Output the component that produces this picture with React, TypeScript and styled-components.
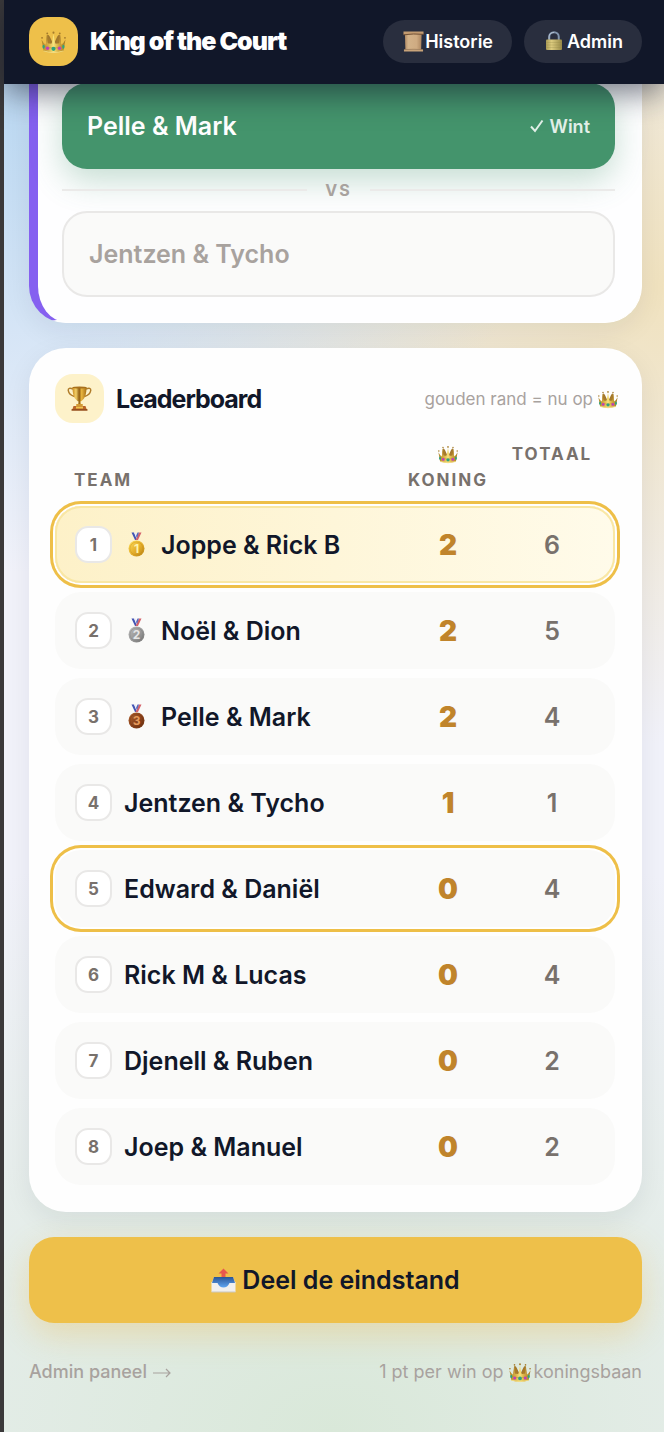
import React, { useId } from 'react';
import styled, { createGlobalStyle, css } from 'styled-components';

const GlobalStyle = createGlobalStyle`
  *, *::before, *::after { box-sizing: border-box; }
  body {
    margin: 0;
    background: #f1f2fa;
    color: #111729;
    font-family: Inter, "Liberation Sans", sans-serif;
    font-size: 16px;
  }
  button { font: inherit; border: 0; cursor: pointer; }
`;

/* ---------- pictograms ---------- */

const Glyph = styled.svg<{ $size: number }>`
  display: block;
  flex: none;
  width: ${(p) => p.$size}px;
  height: ${(p) => p.$size}px;
`;

type IconProps = { size: number };

function Crown({ size }: IconProps) {
  const id = useId();
  return (
    <Glyph $size={size} viewBox="0 0 48 48" aria-hidden="true">
      <defs>
        <linearGradient id={id} x1="0" x2="1">
          <stop offset="0" stopColor="#b1862a" />
          <stop offset=".3" stopColor="#d9b148" />
          <stop offset=".5" stopColor="#f8e27a" />
          <stop offset=".7" stopColor="#d6ac42" />
          <stop offset="1" stopColor="#a27a24" />
        </linearGradient>
      </defs>
      <path d="M9 34 L11 12 Q14 9 17 15 L23 28 H25 L31 15 Q34 9 37 12 L39 34 Z" fill="#a1782e" />
      <path
        d="M5 42 L1 20 Q5 28 9 30 L12 11 Q13 21 17 27 Q20 30 21 26 L24 9 L27 26 Q28 30 31 27 Q35 21 36 11 L39 30 Q43 28 47 20 L43 42 Q24 49 5 42 Z"
        fill={`url(#${id})`}
      />
      <path d="M12 12 Q11 20 13 27 Q16 29 19 27 Q17 20 12 12 Z M36 12 Q37 20 35 27 Q32 29 29 27 Q31 20 36 12 Z" fill="#a87b2a" />
      <path d="M4 33 Q24 40 44 33" fill="none" stroke="#b58a30" strokeWidth="1" />
      <path d="M5 42 Q24 48 43 42" fill="none" stroke="#f3dc82" strokeWidth="2" />
      <g fill="#a67c2c">
        <circle cx="2" cy="17" r="1.800" />
        <circle cx="12" cy="8.500" r="1.800" />
        <circle cx="24" cy="7" r="2" />
        <circle cx="36" cy="8.500" r="1.800" />
        <circle cx="46" cy="17" r="1.800" />
      </g>
      <circle cx="24" cy="38" r="4" fill="#2fa27d" />
      <circle cx="12.500" cy="37" r="3.300" fill="#c13fb8" />
      <circle cx="35.500" cy="37" r="3.300" fill="#c13fb8" />
      <ellipse cx="5" cy="34" rx="2.200" ry="3.800" fill="#2fa27d" />
      <ellipse cx="43" cy="34" rx="2.200" ry="3.800" fill="#2fa27d" />
    </Glyph>
  );
}

function Scroll({ size }: IconProps) {
  const id = useId();
  return (
    <Glyph $size={size} viewBox="0 0 44 44" aria-hidden="true">
      <defs>
        <linearGradient id={id} x1="0" x2="1">
          <stop offset="0" stopColor="#b18a63" />
          <stop offset=".2" stopColor="#d3b289" />
          <stop offset=".7" stopColor="#cfab82" />
          <stop offset="1" stopColor="#ad8660" />
        </linearGradient>
      </defs>
      <path d="M4 5 H39 L38 39 H5 Z" fill={`url(#${id})`} />
      <path d="M1 1 H43 V7 Q22 5 1 8 Z" fill="#c39b70" />
      <path d="M1 8 Q22 5 43 7" stroke="#6d4d32" strokeWidth="2" fill="none" />
      <path d="M2 39 Q22 37 42 39 L42 43 H2 Z" fill="#c9a47a" />
      <path d="M2 39 Q22 37 42 39" stroke="#a07c56" strokeWidth="1" fill="none" />
    </Glyph>
  );
}

function Lock({ size }: IconProps) {
  const id = useId();
  return (
    <Glyph $size={size} viewBox="0 0 40 40" aria-hidden="true">
      <defs>
        <linearGradient id={id} x1="0" x2="1">
          <stop offset="0" stopColor="#a99a55" />
          <stop offset=".35" stopColor="#dccb7e" />
          <stop offset="1" stopColor="#988a48" />
        </linearGradient>
      </defs>
      <path d="M10.500 19 V11.500 A9.500 9 0 0 1 29.500 11.500 V19" fill="none" stroke="#8295ad" strokeWidth="4" />
      <path d="M10 17 V11.500 A10 9 0 0 1 20 3" fill="none" stroke="#c1cddd" strokeWidth="1.500" />
      <rect x="4" y="17" width="32" height="21" rx="2" fill={`url(#${id})`} />
      <path d="M5 23 H35 M5 28 H35 M5 33 H35" stroke="#8e8244" strokeWidth="1" opacity=".5" />
    </Glyph>
  );
}

function Trophy({ size }: IconProps) {
  const id = useId();
  return (
    <Glyph $size={size} viewBox="0 0 50 50" aria-hidden="true">
      <defs>
        <linearGradient id={id} x1="0" x2="1">
          <stop offset="0" stopColor="#c98b1f" />
          <stop offset=".25" stopColor="#f4d26a" />
          <stop offset=".48" stopColor="#8e5d12" />
          <stop offset=".65" stopColor="#e9b640" />
          <stop offset="1" stopColor="#a66f16" />
        </linearGradient>
      </defs>
      <path
        d="M12 6 Q2 2 2.500 9 Q4 18 15 21 M38 6 Q48 2 47.500 9 Q46 18 35 21"
        fill="none"
        stroke="#b07c2a"
        strokeWidth="3"
      />
      <path d="M11 2 H39 Q39 18 34 25 Q30 30 27 31 L28 39 H22 L23 31 Q20 30 16 25 Q11 18 11 2 Z" fill={`url(#${id})`} />
      <ellipse cx="25" cy="3" rx="14" ry="2" fill="#a8701c" />
      <rect x="18" y="36" width="14" height="4" rx="2" fill="#d19a35" />
      <path d="M13 40 H37 L39 46 H11 Z" fill="#b9652a" />
      <path d="M18 41 H32 V45 H18 Z" fill="#f0c64f" />
      <rect x="9" y="46" width="32" height="3.500" rx="1" fill="#96501f" />
    </Glyph>
  );
}

const medalTone = {
  1: { light: '#ffe05a', mid: '#e3ac2a', dark: '#b98314', mark: '#fff3ac' },
  2: { light: '#bdbdbd', mid: '#989898', dark: '#747474', mark: '#e6e6e6' },
  3: { light: '#b0622f', mid: '#8a421b', dark: '#692f10', mark: '#e59a5c' },
};

const MedalMark = styled.text`
  font-family: Inter, "Liberation Sans", sans-serif;
  font-size: 24px;
  font-weight: 700;
  text-anchor: middle;
`;

function Medal({ size, place }: IconProps & { place: 1 | 2 | 3 }) {
  const id = useId();
  const tone = medalTone[place];
  return (
    <Glyph $size={size} viewBox="0 0 50 50" role="img" aria-label={`Plaats ${place}`}>
      <defs>
        <linearGradient id={id} x1="0" y1="0" x2="1" y2="1">
          <stop offset="0" stopColor={tone.light} />
          <stop offset=".55" stopColor={tone.mid} />
          <stop offset="1" stopColor={tone.dark} />
        </linearGradient>
      </defs>
      <path d="M15 1 H20 L27 16 H22 Z" fill="#4355b4" />
      <path d="M20 1 H24 L27 12 L26 16 Z" fill="#e9ecf8" />
      <path d="M35 1 H30 L23 16 H28 Z" fill="#d5626a" />
      <path d="M30 1 H27 L24 8 L26 12 Z" fill="#5566bb" />
      <circle cx="25" cy="33" r="16" fill={`url(#${id})`} />
      <circle cx="25" cy="33" r="13" fill="none" stroke={tone.dark} strokeWidth="1.200" opacity=".5" />
      <MedalMark x="25" y="41.500" fill={tone.mark}>
        {place}
      </MedalMark>
    </Glyph>
  );
}

function Outbox({ size }: IconProps) {
  const id = useId();
  return (
    <Glyph $size={size} viewBox="0 0 50 50" aria-hidden="true">
      <defs>
        <linearGradient id={id} x1="0" y1="0" x2="0" y2="1">
          <stop offset="0" stopColor="#2a5595" />
          <stop offset="1" stopColor="#5ea5f2" />
        </linearGradient>
      </defs>
      <path d="M6 18 H44 L49 31 H1 Z" fill="#d9dde2" />
      <path d="M1 28 H49 V48 H1 Z" fill="#f1f0ee" />
      <path d="M6 18 H44 L48 30 H37 Q33 39 25 39 Q17 39 13 30 H2 Z" fill={`url(#${id})`} />
      <path d="M1 48 H49" stroke="#c9c6bf" strokeWidth="2" />
      <path d="M25 1 L35 11 H29 V18 H21 V11 H15 Z" fill="#e8584d" />
    </Glyph>
  );
}

function Check({ size }: IconProps) {
  return (
    <Glyph $size={size} viewBox="0 0 14 14" aria-hidden="true">
      <path d="M1 7.500 L5 12 L12.500 1.500" fill="none" stroke="currentColor" strokeWidth="2" />
    </Glyph>
  );
}

function Arrow() {
  return (
    <Glyph $size={18} viewBox="0 0 18 18" aria-hidden="true">
      <path d="M0 10 H17 M13 6 L17 10 L13 14" fill="none" stroke="currentColor" strokeWidth="1.200" />
    </Glyph>
  );
}

/* ---------- layout ---------- */

const Page = styled.div`
  min-height: 100vh;
  border-left: 4px solid #3b393a;
  background:
    radial-gradient(ellipse 85% 32% at 0% 8%, rgba(184, 215, 242, 0.9), rgba(184, 215, 242, 0) 100%),
    radial-gradient(ellipse 90% 32% at 100% 20%, rgba(240, 224, 184, 0.9), rgba(240, 224, 184, 0) 100%),
    radial-gradient(ellipse 130% 42% at 50% 100%, rgba(217, 232, 217, 1), rgba(217, 232, 217, 0) 100%),
    #f1f2fa;
`;

const TopBar = styled.header`
  position: sticky;
  top: 0;
  z-index: 2;
  display: flex;
  align-items: center;
  justify-content: space-between;
  height: 84px;
  padding: 0 22px 2px 25px;
  background: #111729;
  box-shadow: 0 8px 32px rgba(17, 23, 41, 0.6);
`;

const Brand = styled.div`
  display: flex;
  align-items: center;
  gap: 12px;
`;

const IconTile = styled.span<{ $tone: 'gold' | 'cream' }>`
  display: grid;
  place-items: center;
  width: 49px;
  height: 49px;
  border-radius: 18px;
  background: ${(p) => (p.$tone === 'gold' ? '#eec04a' : '#fdf2ca')};
`;

const BrandName = styled.h1`
  margin: 0;
  font-size: 25px;
  font-weight: 900;
  letter-spacing: -1px;
  color: #fff;
`;

const Nav = styled.nav`
  display: flex;
  gap: 12px;
`;

const NavLink = styled.a<{ $gap: number }>`
  display: flex;
  align-items: center;
  gap: ${(p) => p.$gap}px;
  height: 43px;
  padding: 0 19px 0 20px;
  border-radius: 22px;
  background: #292e3e;
  color: #fff;
  font-size: 18px;
  font-weight: 600;
  text-decoration: none;
`;

const Content = styled.main`
  display: flex;
  flex-direction: column;
  gap: 25px;
  margin-top: -1px;
  padding: 0 22px 0 25px;
`;

const MatchCard = styled.section`
  display: flex;
  flex-direction: column;
  padding: 0 26px 25px 24px;
  border: 1px solid #fff;
  border-top: 0;
  border-left: 9px solid #8560f0;
  border-radius: 0 0 37px 37px;
  background: #fefeff;
  box-shadow: 0 8px 28px rgba(17, 23, 41, 0.07);
`;

const TeamButton = styled.button<{ $winner?: boolean }>`
  display: flex;
  align-items: center;
  justify-content: space-between;
  height: 86px;
  padding: 0 25px;
  border-radius: 25px;
  font-size: 25px;
  font-weight: 600;
  ${(p) =>
    p.$winner
      ? css`
          background: #44946c;
          color: #fff;
          box-shadow: 0 12px 32px rgba(68, 148, 108, 0.3);
        `
      : css`
          border: 2px solid #e9e8e7;
          background: #fafaf9;
          color: #a8a29e;
        `}
`;

const WinTag = styled.span`
  display: flex;
  align-items: center;
  gap: 6px;
  font-size: 18px;
  color: #e3f0e9;
`;

const Versus = styled.div`
  display: flex;
  align-items: center;
  gap: 18px;
  height: 42px;
  color: #a8a29e;
  font-size: 16px;
  font-weight: 700;
  letter-spacing: 2px;

  &::before,
  &::after {
    content: '';
    flex: 1;
    height: 2px;
    background: #ebeae9;
  }
`;

const BoardCard = styled.section`
  padding: 26px 27px 27px 26px;
  border-radius: 37px;
  background: #fefefe;
  box-shadow: 0 8px 28px rgba(17, 23, 41, 0.07);
`;

const BoardHead = styled.div`
  display: flex;
  align-items: center;
  gap: 12px;
`;

const BoardTitle = styled.h2`
  flex: 1;
  margin: 0;
  font-size: 25px;
  font-weight: 700;
  letter-spacing: -1px;
`;

const Hint = styled.span`
  display: flex;
  align-items: center;
  gap: 5px;
  margin-right: -3px;
  color: #a8a29e;
  font-size: 17px;
`;

const Board = styled.table`
  display: block;
  margin-top: 18px;

  thead {
    display: block;
  }

  tbody {
    display: flex;
    flex-direction: column;
    gap: 9px;
    margin-top: 13px;
  }
`;

const rowGrid = css`
  display: grid;
  grid-template-columns: 1fr 98px 98px;
  column-gap: 6px;
  padding: 0 14px 0 20px;
`;

const HeadRow = styled.tr`
  ${rowGrid}
  padding-left: 19px;
`;

const HeadCell = styled.th<{ $align?: string }>`
  align-self: ${(p) => p.$align ?? 'start'};
  padding: 0;
  color: #78716c;
  font-size: 17px;
  line-height: 26px;
  font-weight: 700;
  letter-spacing: 2px;
  text-align: center;
  text-transform: uppercase;

  &:first-child {
    text-align: left;
  }

  svg {
    margin: 3px auto;
  }
`;

const TeamRow = styled.tr<{ $ring: boolean; $leader: boolean }>`
  ${rowGrid}
  align-items: center;
  height: 77px;
  border-radius: 26px;
  background: ${(p) => (p.$leader ? 'linear-gradient(90deg, #fdf1c8, #fffbea)' : '#fafaf9')};
  box-shadow:
    ${(p) => (p.$leader ? 'inset 0 0 0 2px #f9e7a4' : 'inset 0 0 0 0 transparent')},
    ${(p) => (p.$ring ? '0 0 0 2px #fff, 0 0 0 5px #eebf48' : '0 0 0 0 transparent')};
`;

const NameCell = styled.th`
  display: flex;
  align-items: center;
  gap: 12px;
  padding: 0;
  font-size: 25px;
  font-weight: 600;
  text-align: left;
  white-space: nowrap;
`;

const Rank = styled.span`
  display: grid;
  place-items: center;
  width: 37px;
  height: 37px;
  border: 2px solid #e9e8e7;
  border-radius: 13px;
  background: #fff;
  color: #78716c;
  font-size: 17px;
  font-weight: 700;
`;

const Score = styled.td<{ $king?: boolean }>`
  padding: 0;
  text-align: center;
  font-size: ${(p) => (p.$king ? 28 : 25)}px;
  font-weight: ${(p) => (p.$king ? 900 : 600)};
  color: ${(p) => (p.$king ? '#c0842b' : '#78716c')};
`;

const ShareButton = styled.button`
  display: flex;
  align-items: center;
  justify-content: center;
  gap: 6px;
  height: 86px;
  border-radius: 25px;
  background: #eec04a;
  color: #111729;
  font-size: 25px;
  font-weight: 600;
  box-shadow: 0 12px 32px rgba(238, 180, 60, 0.3);
`;

const Footer = styled.footer`
  display: flex;
  align-items: center;
  justify-content: space-between;
  margin-top: 12px;
  padding-bottom: 48px;
  color: #a8a29e;
  font-size: 18px;
  line-height: 24px;
`;

const FooterLink = styled.a`
  display: flex;
  align-items: center;
  gap: 6px;
  color: inherit;
  font-weight: 500;
  text-decoration: none;
`;

const FooterNote = styled.span`
  display: flex;
  align-items: center;
  gap: 3px;
`;

const NoteText = styled.span`
  margin-right: 2px;
`;

/* ---------- data ---------- */

type Team = { name: string; king: number; total: number; onCourt?: boolean };

const teams: Team[] = [
  { name: 'Joppe & Rick B', king: 2, total: 6, onCourt: true },
  { name: 'Noël & Dion', king: 2, total: 5 },
  { name: 'Pelle & Mark', king: 2, total: 4 },
  { name: 'Jentzen & Tycho', king: 1, total: 1 },
  { name: 'Edward & Daniël', king: 0, total: 4, onCourt: true },
  { name: 'Rick M & Lucas', king: 0, total: 4 },
  { name: 'Djenell & Ruben', king: 0, total: 2 },
  { name: 'Joep & Manuel', king: 0, total: 2 },
];

export default function App() {
  return (
    <>
      <GlobalStyle />
      <Page>
        <TopBar>
          <Brand>
            <IconTile $tone="gold">
              <Crown size={25} />
            </IconTile>
            <BrandName>King of the Court</BrandName>
          </Brand>
          <Nav>
            <NavLink href="#historie" $gap={1}>
              <Scroll size={21} />
              Historie
            </NavLink>
            <NavLink href="#admin" $gap={3}>
              <Lock size={20} />
              Admin
            </NavLink>
          </Nav>
        </TopBar>

        <Content>
          <MatchCard>
            <TeamButton type="button" $winner>
              Pelle &amp; Mark
              <WinTag>
                <Check size={14} />
                Wint
              </WinTag>
            </TeamButton>
            <Versus>VS</Versus>
            <TeamButton type="button">Jentzen &amp; Tycho</TeamButton>
          </MatchCard>

          <BoardCard>
            <BoardHead>
              <IconTile $tone="cream">
                <Trophy size={25} />
              </IconTile>
              <BoardTitle>Leaderboard</BoardTitle>
              <Hint>
                gouden rand = nu op <Crown size={20} />
              </Hint>
            </BoardHead>
            <Board>
              <thead>
                <HeadRow>
                  <HeadCell scope="col" $align="end">
                    Team
                  </HeadCell>
                  <HeadCell scope="col">
                    <Crown size={20} />
                    Koning
                  </HeadCell>
                  <HeadCell scope="col">Totaal</HeadCell>
                </HeadRow>
              </thead>
              <tbody>
                {teams.map((team, i) => (
                  <TeamRow key={team.name} $ring={!!team.onCourt} $leader={i === 0}>
                    <NameCell scope="row">
                      <Rank>{i + 1}</Rank>
                      {i < 3 && <Medal size={25} place={(i + 1) as 1 | 2 | 3} />}
                      {team.name}
                    </NameCell>
                    <Score $king>{team.king}</Score>
                    <Score>{team.total}</Score>
                  </TeamRow>
                ))}
              </tbody>
            </Board>
          </BoardCard>

          <ShareButton type="button">
            <Outbox size={25} />
            Deel de eindstand
          </ShareButton>

          <Footer>
            <FooterLink href="#admin">
              Admin paneel
              <Arrow />
            </FooterLink>
            <FooterNote>
              <NoteText>1 pt per win op</NoteText>
              <Crown size={22} />
              koningsbaan
            </FooterNote>
          </Footer>
        </Content>
      </Page>
    </>
  );
}
